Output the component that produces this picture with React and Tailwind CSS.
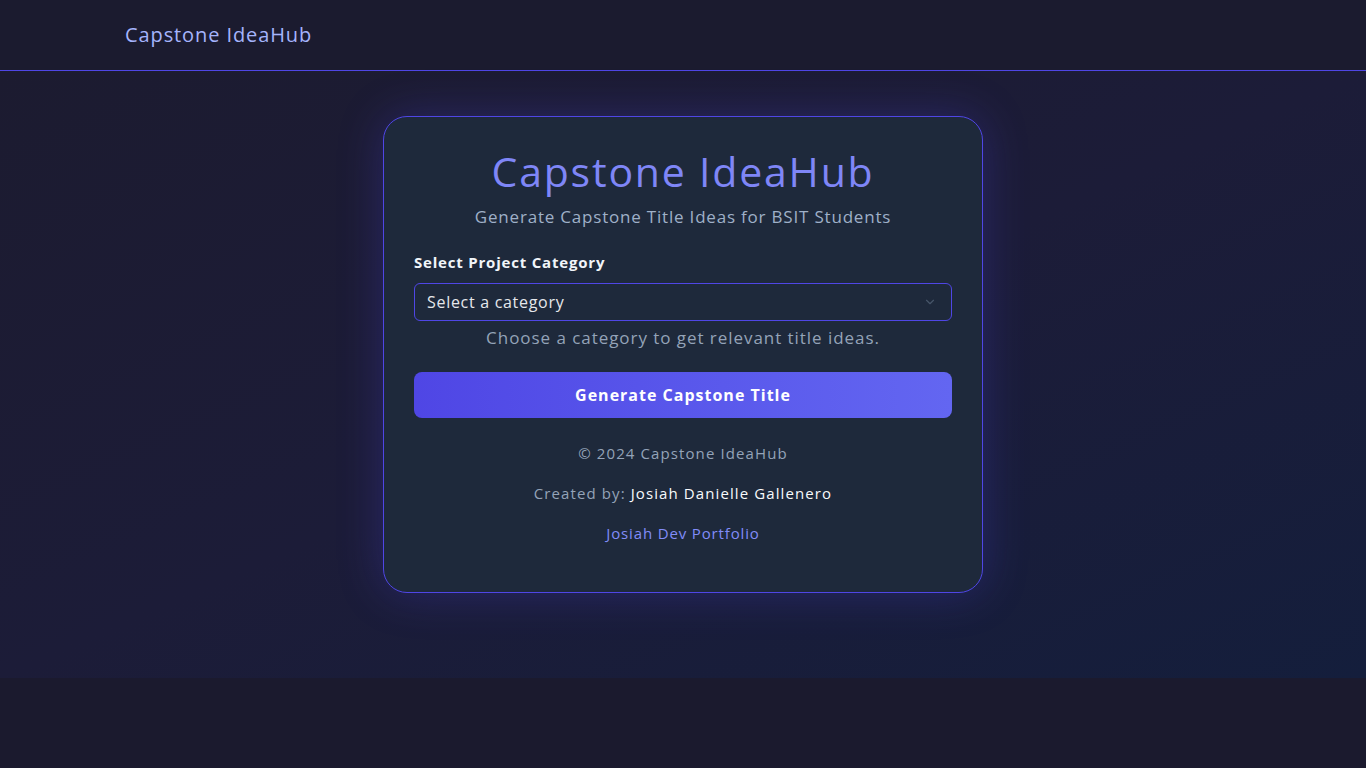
import { ChevronDown } from 'lucide-react';

export default function App() {
  return (
    <div className="min-h-screen bg-[#1b1a2e] font-['Open_Sans',sans-serif]">
      {/* Top bar */}
      <header className="h-[71px] bg-[#1b1b2f] border-b border-[#4f46e5] flex items-center px-[125px]">
        <span className="text-[20px] text-[#a5b4fc] tracking-[0.9px]">Capstone IdeaHub</span>
      </header>

      {/* Main */}
      <main className="h-[607px] flex justify-center pt-[45px] bg-gradient-to-br from-[#1c1b30] via-[#1c1c38] to-[#141e3c]">
        <div className="w-[600px] h-[477px] rounded-[24px] border border-[#4f46e5] bg-[#1e293b] px-[30px] pt-[24px] shadow-[0_0_45px_rgba(79,70,229,0.28)] flex flex-col">
          <h1 className="text-center text-[41px] leading-[60px] text-[#7f86f7] tracking-[1.8px]">Capstone IdeaHub</h1>
          <p className="mt-[3px] text-center text-[17px] leading-[26px] text-[#9fb0c8] tracking-[0.8px]">
            Generate Capstone Title Ideas for BSIT Students
          </p>

          <label className="mt-[21px] text-[15px] leading-[22px] font-bold text-[#f1f5f9] tracking-[0.8px]">
            Select Project Category
          </label>
          <div className="mt-[10px] h-[38px] rounded-[6px] border border-[#4f46e5] bg-[#1e293b] flex items-center justify-between pl-[12px] pr-[14px]">
            <span className="text-[16px] text-[#e5e7eb] tracking-[0.7px]">Select a category</span>
            <ChevronDown size={14} className="text-[#475569]" />
          </div>
          <p className="mt-[4px] text-center text-[17px] leading-[26px] text-[#94a3b8] tracking-[0.95px]">
            Choose a category to get relevant title ideas.
          </p>

          <button className="mt-[21px] h-[46px] rounded-[8px] bg-gradient-to-r from-[#4f46e5] to-[#6366f1] text-white text-[16px] font-bold tracking-[1px]">
            Generate Capstone Title
          </button>

          <p className="mt-[23px] text-center text-[15px] leading-[24px] text-[#94a3b8] tracking-[1.1px]">© 2024 Capstone IdeaHub</p>
          <p className="mt-[16px] text-center text-[15px] leading-[24px] text-[#94a3b8] tracking-[1.1px]">
            Created by: <span className="text-[#f8fafc]">Josiah Danielle Gallenero</span>
          </p>
          <a href="#" className="mt-[16px] text-center text-[15px] leading-[24px] text-[#818cf8] tracking-[0.85px]">Josiah Dev Portfolio</a>
        </div>
      </main>
    </div>
  );
}
